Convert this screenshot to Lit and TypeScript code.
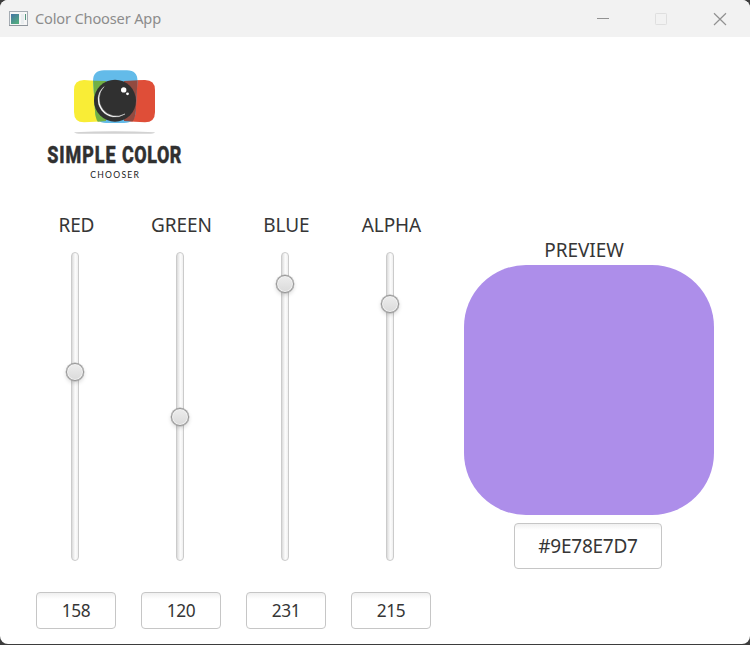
import { LitElement, html, css } from "lit";
import { customElement, property } from "lit/decorators.js";
import { styleMap } from "lit/directives/style-map.js";

@customElement("brand-logo")
class BrandLogo extends LitElement {
  static styles = css`
    :host { display: block; width: 170px; height: 135px; }
    svg { display: block; }
    .name { font: 800 23.6px Roboto, sans-serif; fill: #303030; stroke: #303030; stroke-width: 0.5; }
    .sub { font: 400 8.6px Lato, sans-serif; fill: #222; }
  `;
  render() {
    return html`<svg width="170" height="135" viewBox="30 55 170 135">
      <path d="M84 80Q97 81 106 81V121Q95 122 84 122.3Q74 122.3 74 112V90Q74 80 84 80Z" fill="#f9ed36" />
      <path d="M145 80Q133 80 124 81V121Q135 122 145 122.3Q155 122.3 155 112V90Q155 80 145 80Z" fill="#df4e38" />
      <path d="M104 70.3H127Q137.5 70.3 137.5 81Q136.5 95 135.8 111Q135.3 123 124 123H106Q95.5 123 95 111Q94 95 93 81Q93 70.3 104 70.3Z" fill="#63bbe9" />
      <path d="M93.2 80.8L106 81V121L97.8 121.8Q95.2 118 95 111Z" fill="#72b044" />
      <path d="M124 81L137.5 80.3L135.8 111Q135.3 118 132.5 121.6L124 121Z" fill="#924a40" />
      <circle cx="115" cy="100.7" r="21" fill="#303030" />
      <path d="M104 86.7A17.25 17.25 0 0 0 125 114A17.4 17.4 0 0 1 104 86.7Z" fill="#fff" stroke="#fff" stroke-width=".4" />
      <circle cx="123.7" cy="89.9" r="2.7" fill="#fff" />
      <circle cx="127.5" cy="93.8" r="1.4" fill="#fff" />
      <path d="M74 132.3Q114 130 155 132.3Q154 133.8 148 133.8H81Q76 133.8 74 132.3Z" fill="#d2d2d2" />
      <text class="name" x="0" y="0" transform="translate(47.2 163) scale(.76 1)" textLength="90">SIMPLE</text>
      <text class="name" x="0" y="0" transform="translate(122.1 163) scale(.76 1)" textLength="78">COLOR</text>
      <text class="sub" x="90.3" y="178" textLength="48.6">CHOOSER</text>
    </svg>`;
  }
}

@customElement("channel-slider")
class ChannelSlider extends LitElement {
  @property() label = "";
  @property({ type: Number }) value = 0;
  static styles = css`
    :host { display: flex; flex-direction: column; align-items: center; width: 80px; color: #363636; font-family: "Noto Sans", "Open Sans", sans-serif; }
    .label { height: 28px; line-height: 28px; font-size: 19px; letter-spacing: -0.12px; white-space: nowrap; padding-left: 0.8px; }
    .track { position: relative; width: 8px; height: 309px; margin: 13px 2px 31px 0; box-sizing: border-box; border: 1px solid #cbcbcb; border-radius: 4px; background: linear-gradient(90deg, #dadada, #f1f1f1 35%, #fcfcfc 60%, #efefef); }
    .thumb { position: absolute; left: -5.7px; width: 18px; height: 18px; box-sizing: border-box; border: 1px solid #929292; border-radius: 50%; background: linear-gradient(#ededed, #dadada); box-shadow: inset 0 0 0 1px #f1f1f1, 0 0 0 0.4px #aaa, 0 2px 4px rgba(0, 0, 0, 0.16); }
    .field { width: 80px; height: 37px; box-sizing: border-box; border: 1px solid #c6c6c6; border-radius: 4px; background: linear-gradient(#f0f0f0, #fff 6px); text-align: center; line-height: 35px; font-size: 17.3px; letter-spacing: -0.4px; }
  `;
  render() {
    const top = 298.3 - this.value * 1.194;
    return html`<div class="label">${this.label}</div>
      <div class="track"><div class="thumb" style=${styleMap({ top: `${top}px` })}></div></div>
      <div class="field">${this.value}</div>`;
  }
}

@customElement("app-root")
class AppRoot extends LitElement {
  static styles = css`
    :host { display: block; width: 750px; height: 645px; background: #3d3d3d; font-family: "Noto Sans", "Open Sans", sans-serif; overflow: hidden; }
    .window { width: 750px; height: 644px; border-radius: 8px; overflow: hidden; background: #fff; display: flex; flex-direction: column; }
    .bar { height: 37px; flex: none; background: #f2f2f2; display: flex; align-items: center; padding-left: 9px; box-sizing: border-box; }
    .title { flex: 1; margin-left: 6px; font-size: 14.6px; line-height: 34px; height: 36px; letter-spacing: -0.16px; color: #8c8c8c; }
    .content { display: flex; }
    .left { padding: 18px 0 0 36px; }
    .logo { margin-left: -6px; }
    .channels { display: flex; gap: 25px; margin-top: 21px; }
    .preview { width: 250px; margin: 200px 0 0 33px; display: flex; flex-direction: column; align-items: center; color: #363636; }
    .caption { height: 27.5px; line-height: 27px; font-size: 19px; letter-spacing: -0.05px; margin-right: 10px; }
    .swatch { width: 250px; height: 250px; border-radius: 62px; background: #ad8eea; }
    .hex { width: 148px; height: 46px; margin: 8.5px 2px 0 0; box-sizing: border-box; border: 1px solid #c6c6c6; border-radius: 4px; background: linear-gradient(#f0f0f0, #fff 6px); text-align: center; line-height: 45px; font-size: 19px; letter-spacing: -0.25px; }
  `;
  render() {
    return html`<div class="window">
      <div class="bar">
        <svg width="20" height="16" viewBox="0 0 20 16">
          <defs><linearGradient id="g" x1="0" y1="0" x2=".6" y2="1"><stop offset="0" stop-color="#4374a5" /><stop offset="1" stop-color="#52aa80" /></linearGradient></defs>
          <rect x=".5" y=".5" width="18" height="14" fill="#f6f6f6" stroke="#a5acb3" />
          <path d="M0 14.5H19" stroke="#8d949b" />
          <rect x="2" y="3" width="8" height="10" fill="url(#g)" />
          <rect x="12" y="3" width="3" height="10" fill="#e9edef" />
          <rect x="16" y="3" width="1" height="6" fill="#55977f" />
        </svg>
        <div class="title">Color Chooser App</div>
        <svg width="154" height="36" viewBox="596 0 154 36" fill="none">
          <path d="M597 17.5H609" stroke="#929292" />
          <rect x="655.5" y="12.5" width="11" height="11" rx=".8" stroke="#dfdfdf" />
          <path d="M714 12.3L726 24M726 12.3L714 24" stroke="#929292" stroke-width="1.2" />
        </svg>
      </div>
      <div class="content">
        <div class="left">
          <brand-logo class="logo"></brand-logo>
          <div class="channels">
            <channel-slider label="RED" value="158"></channel-slider>
            <channel-slider label="GREEN" value="120"></channel-slider>
            <channel-slider label="BLUE" value="231"></channel-slider>
            <channel-slider label="ALPHA" value="215"></channel-slider>
          </div>
        </div>
        <div class="preview">
          <div class="caption">PREVIEW</div>
          <div class="swatch"></div>
          <div class="hex">#9E78E7D7</div>
        </div>
      </div>
    </div>`;
  }
}
